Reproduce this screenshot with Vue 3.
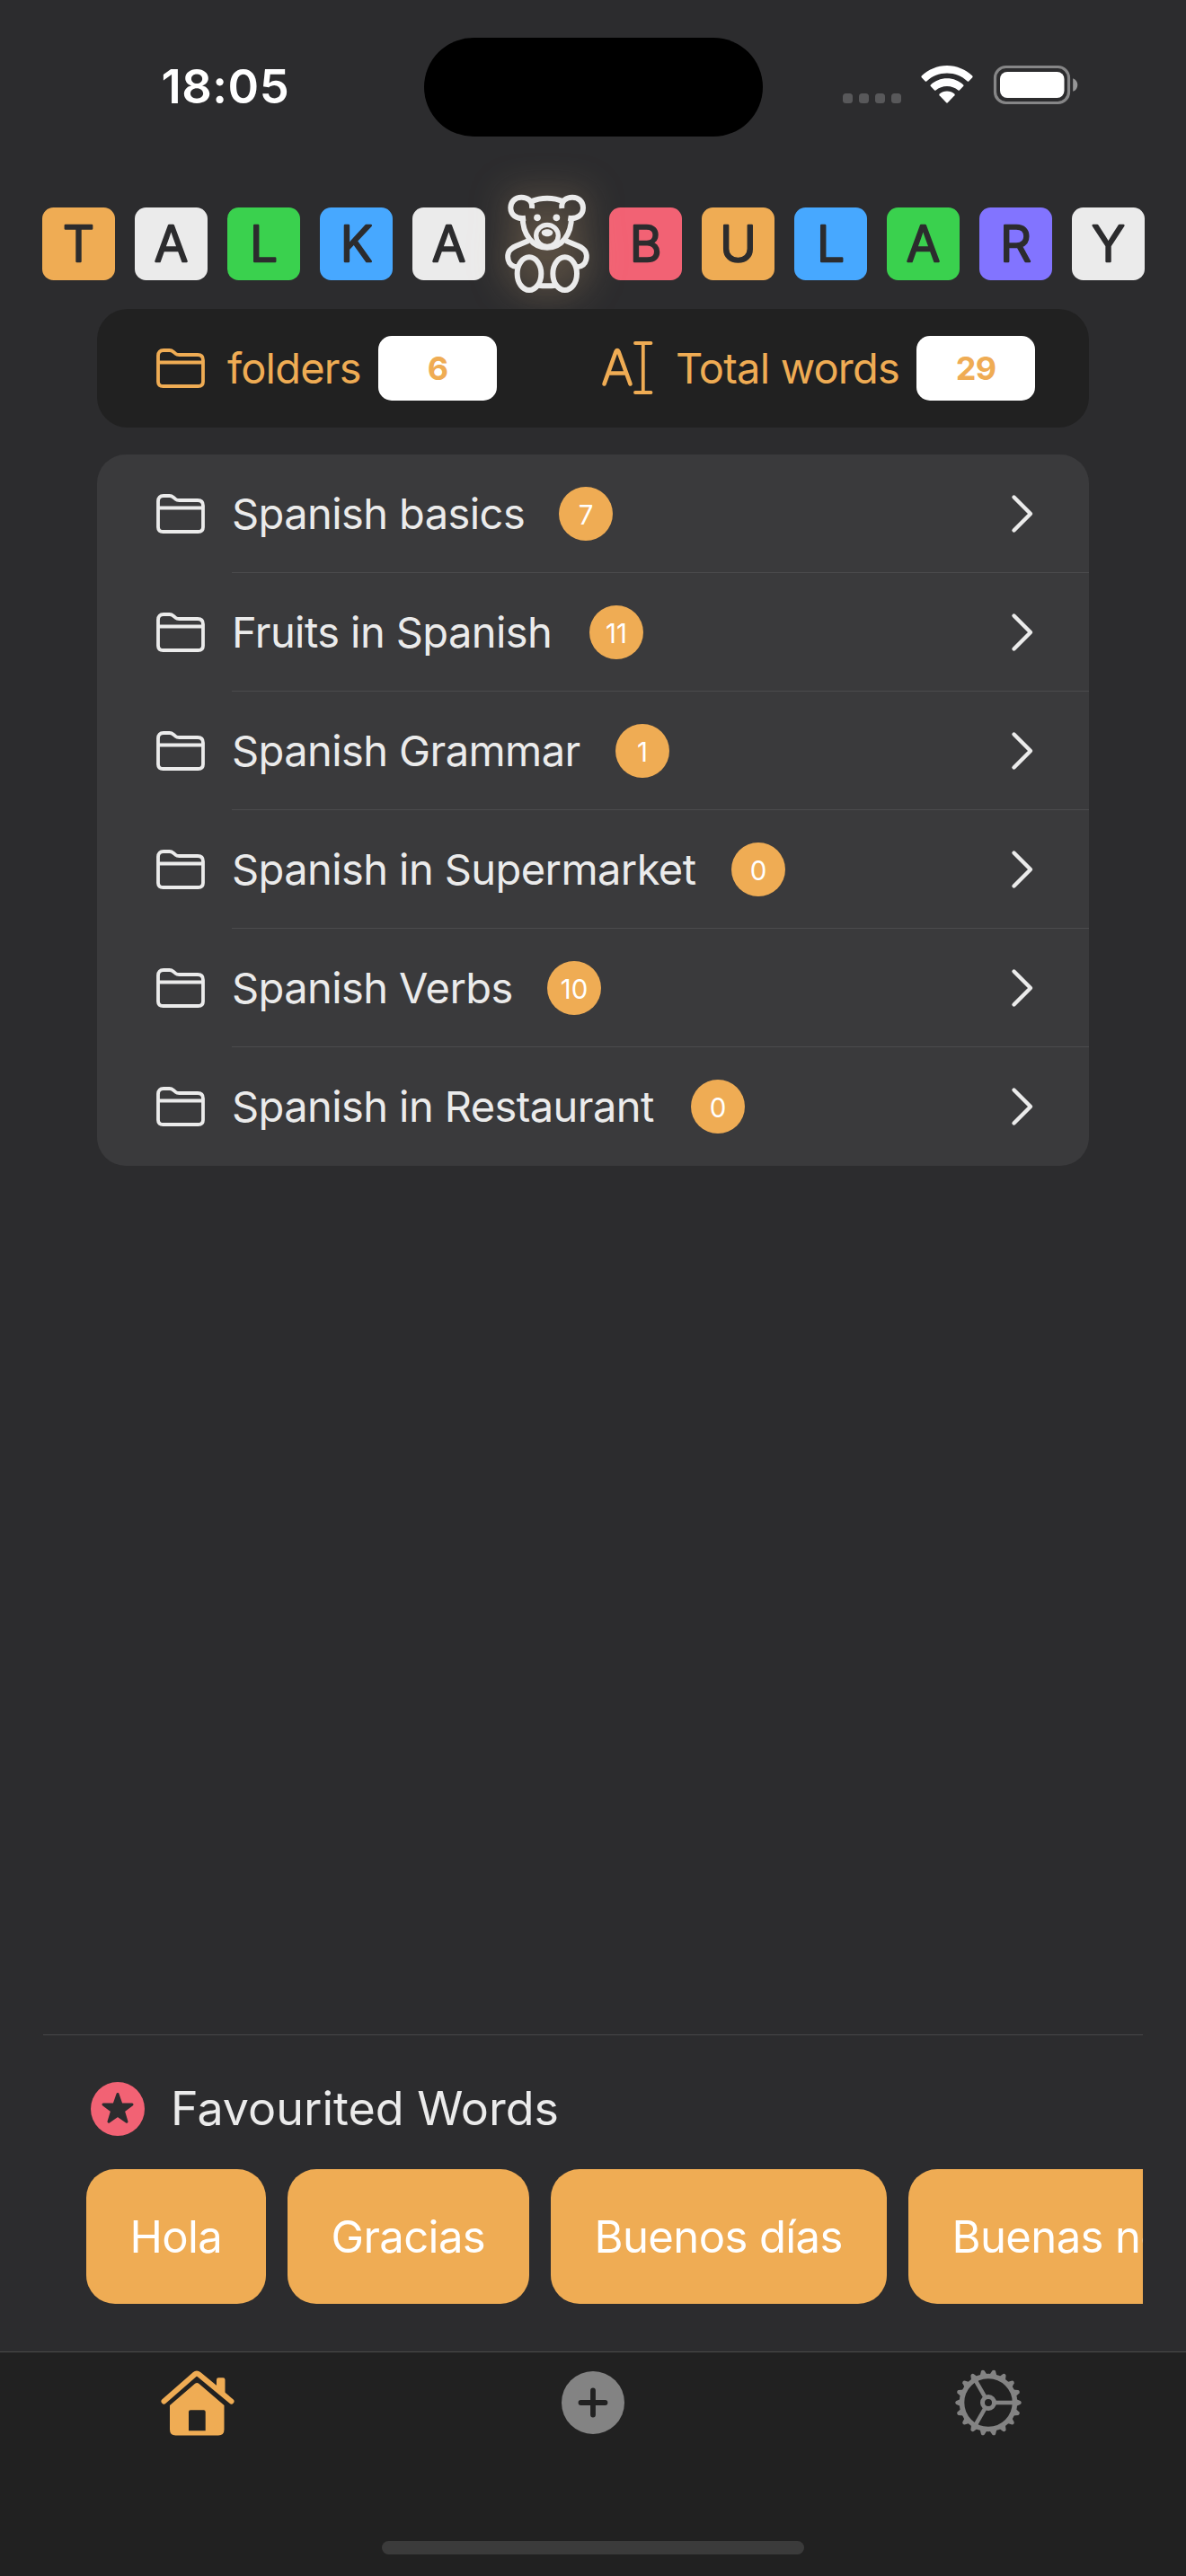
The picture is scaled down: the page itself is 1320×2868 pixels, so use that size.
<script setup>
const title = [
  { ch: 'T', color: '#efac54' },
  { ch: 'A', color: '#ebebeb' },
  { ch: 'L', color: '#3ad14e' },
  { ch: 'K', color: '#47a8ff' },
  { ch: 'A', color: '#ebebeb' },
  { bear: true },
  { ch: 'B', color: '#f26274' },
  { ch: 'U', color: '#efac54' },
  { ch: 'L', color: '#47a8ff' },
  { ch: 'A', color: '#3ad14e' },
  { ch: 'R', color: '#8274ff' },
  { ch: 'Y', color: '#ebebeb' }
]

const folders = [
  { name: 'Spanish basics', count: 7, width: 324 },
  { name: 'Fruits in Spanish', count: 11, width: 358 },
  { name: 'Spanish Grammar', count: 1, width: 387 },
  { name: 'Spanish in Supermarket', count: 0, width: 516 },
  { name: 'Spanish Verbs', count: 10, width: 311 },
  { name: 'Spanish in Restaurant', count: 0, width: 471 }
]

const favourites = [
  { word: 'Hola', width: 200 },
  { word: 'Gracias', width: 269 },
  { word: 'Buenos días', width: 374 },
  { word: 'Buenas noches', width: 440 }
]

const teeth = Array.from({ length: 18 }, (_, i) => i * 20)
</script>

<template>
  <div class="screen">
    <header class="status">
      <div class="time">18:05</div>
      <div class="island"></div>
      <div class="indicators">
        <div class="dots"><i v-for="n in 4" :key="n"></i></div>
        <svg class="wifi" width="58" height="42" viewBox="0 0 58 42">
          <path d="M29 0C40 0 50 4.500 57.300 11.600Q58 12.400 57.300 13.200L53.200 17.500Q52.500 18.200 51.700 17.500C45.500 11.800 37.600 8.600 29 8.600S12.500 11.800 6.300 17.500Q5.500 18.200 4.800 17.500L.7 13.200Q0 12.400 .7 11.600C8 4.500 18 0 29 0Z" />
          <path d="M29 14.300C36 14.300 42.400 17 47.200 21.400Q48 22.200 47.200 23L42.900 27.500Q42.200 28.200 41.400 27.500C38 24.500 33.700 22.900 29 22.900S20 24.500 16.600 27.500Q15.800 28.200 15.100 27.500L10.800 23Q10 22.200 10.800 21.400C15.600 17 22 14.300 29 14.300Z" />
          <path d="M29 28.600C32.300 28.600 35.100 29.700 37.300 31.500Q38.200 32.300 37.400 33.200L29.800 41.300Q29 42.100 28.200 41.300L20.600 33.200Q19.800 32.300 20.700 31.500C22.900 29.700 25.700 28.600 29 28.600Z" />
        </svg>
        <svg class="battery" width="94" height="43" viewBox="0 0 94 43">
          <rect x="1.500" y="1.500" width="82" height="40" rx="12" fill="none" stroke="#868687" stroke-width="3.200" />
          <rect x="7" y="7" width="71.500" height="29" rx="8" fill="#fff" />
          <path d="M88.200 14.200C95 16.500 95 26.500 88.200 28.800Z" fill="#969697" />
        </svg>
      </div>
    </header>

    <div class="title">
      <template v-for="(t, i) in title" :key="i">
        <svg v-if="t.bear" class="bear" width="94" height="110" viewBox="96 78 282 330">
          <g fill="none" stroke="#ebebeb" stroke-width="18">
            <path d="M183 103Q208 92 237 92T291 103" />
            <path d="M186 126C189 100 170 89 151 89C130 89 115 104 115 124C115 147 133 163 165 158" />
            <path d="M286 126C283 100 302 89 321 89C342 89 357 104 357 124C357 147 339 163 307 158" />
            <path d="M155 152C154 215 190 257 237 257S319 215 318 152" />
            <ellipse cx="237" cy="217" rx="37" ry="36" stroke-width="16" />
            <path d="M175 234L132 252C108 263 102 277 107 298C111 314 122 321 138 322" />
            <path d="M299 234L342 252C366 263 372 277 367 298C363 314 352 321 336 322" />
            <ellipse cx="177" cy="344" rx="40" ry="55" />
            <ellipse cx="296" cy="344" rx="40" ry="55" />
            <path d="M207 383Q237 387 266 383" />
          </g>
          <g fill="#ebebeb">
            <circle cx="204" cy="157" r="11.500" />
            <circle cx="268" cy="157" r="11.500" />
            <path d="M218 206C220 192 254 192 256 206C255 224 219 224 218 206Z" />
          </g>
        </svg>
        <svg v-else class="tile" width="81" height="81" viewBox="0 0 81 81">
          <rect width="81" height="81" rx="12.500" :fill="t.color" />
          <text x="40.500" y="60" text-anchor="middle">{{ t.ch }}</text>
        </svg>
      </template>
    </div>

    <section class="stats">
      <svg class="folder" width="54" height="44" viewBox="0 0 54 44">
        <path d="M2 37V8Q2 2 8 2H14.500Q17 2 19 3.700L21 5.400Q23 7 25.500 7H46Q52 7 52 13V37Q52 42 46.500 42H7.500Q2 42 2 37ZM2 15.500H52" />
      </svg>
      <span class="label folders-label">folders</span>
      <span class="value">6</span>
      <svg class="cursor-icon" width="57" height="60" viewBox="0 0 57 60">
        <path d="M2.500 47.500L15.300 12Q17 8 18.700 12L31.500 47.500M7 35.500H27" stroke-width="4.600" />
        <path d="M37 2H54.500M37 57H54.500M45.800 2V57" stroke-width="3.800" />
      </svg>
      <span class="label total-label">Total words</span>
      <span class="value">29</span>
    </section>

    <ul class="list">
      <li v-for="f in folders" :key="f.name" class="row">
        <svg class="folder" width="54" height="44" viewBox="0 0 54 44">
          <path d="M2 37V8Q2 2 8 2H14.500Q17 2 19 3.700L21 5.400Q23 7 25.500 7H46Q52 7 52 13V37Q52 42 46.500 42H7.500Q2 42 2 37ZM2 15.500H52" />
        </svg>
        <div class="row-body">
          <span class="name" :style="{ width: f.width + 'px' }">{{ f.name }}</span>
          <span class="count">{{ f.count }}</span>
          <svg class="chevron" width="24" height="42" viewBox="0 0 24 42">
            <path d="M2.500 2.500L21 21L2.500 39.500" />
          </svg>
        </div>
      </li>
    </ul>

    <section class="favourites">
      <div class="fav-head">
        <svg width="60" height="60" viewBox="0 0 60 60">
          <circle cx="30" cy="30" r="30" fill="#f26274" />
          <path d="M30 13.500L34 25H46L36.400 32.300L40 44.200L30 37.200L20 44.200L23.600 32.300L14 25H26Z" fill="#2c2c2e" stroke="#2c2c2e" stroke-width="3" stroke-linejoin="round" />
        </svg>
        <h2>Favourited Words</h2>
      </div>
      <div class="chips">
        <div v-for="c in favourites" :key="c.word" class="chip" :style="{ width: c.width + 'px' }">{{ c.word }}</div>
      </div>
    </section>

    <nav class="tabs">
      <div class="tab">
        <svg width="84" height="74" viewBox="0 0 84 74">
          <g transform="translate(.5 1)">
            <path d="M4 35L38 5.200Q40.500 3.200 43 5.200L79 35" transform="translate(0 -.5)" fill="none" stroke="#efac54" stroke-width="6" stroke-linecap="round" stroke-linejoin="round" />
            <path d="M62.500 22V10.500Q62.500 8.300 64.700 8.300H69.800Q72 8.300 72 10.500V30Z" fill="#efac54" />
            <path fill-rule="evenodd" d="M10.500 39L38.600 14.800Q40.700 13 42.800 14.800L71 39V66Q71 72.500 64.500 72.500H17Q10.500 72.500 10.500 66ZM33.500 44.300Q31.500 44.300 31.500 46.300V67.200H50.200V46.300Q50.200 44.300 48.200 44.300Z" fill="#efac54" />
          </g>
        </svg>
      </div>
      <div class="tab">
        <svg width="70" height="74" viewBox="0 -2 70 74">
          <circle cx="35" cy="35" r="35" fill="#838383" />
          <path d="M35 21.500V48.500M21.500 35H48.500" stroke="#212121" stroke-width="5.800" stroke-linecap="round" />
        </svg>
      </div>
      <div class="tab">
        <svg width="76" height="76" viewBox="-38 -38 76 76">
          <g fill="none" stroke="#838383">
            <circle r="29.500" stroke-width="5.600" />
            <circle r="6.500" stroke-width="5" />
            <g stroke-width="4.600">
              <path d="M8 0H29" />
              <path d="M8 0H29" transform="rotate(120)" />
              <path d="M8 0H29" transform="rotate(240)" />
            </g>
          </g>
          <path v-for="a in teeth" :key="a" d="M30.500 -4.200L36 -1.800Q37.800 0 36 1.800L30.500 4.200Z" fill="#838383" :transform="`rotate(${a})`" />
        </svg>
      </div>
    </nav>
    <div class="home-bar"><i></i></div>
  </div>
</template>

<style>
body {
  background: #2c2c2e;
}
</style>

<style scoped>
.screen {
  width: 1320px;
  height: 2868px;
  box-sizing: border-box;
  display: flex;
  flex-direction: column;
  overflow: hidden;
  background: #2c2c2e;
  color: #ebebeb;
  font-family: Inter, "Liberation Sans", sans-serif;
}
svg {
  display: block;
  flex: none;
  overflow: visible;
}
.status {
  height: 216px;
  display: flex;
  align-items: flex-start;
  box-sizing: border-box;
  padding-top: 42px;
}
.time {
  width: 292px;
  padding-left: 179.500px;
  height: 110px;
  line-height: 109px;
  font-size: 52.500px;
  font-weight: 600;
  letter-spacing: 0.500px;
  color: #fff;
}
.island {
  width: 377px;
  height: 110px;
  border-radius: 55px;
  background: #000;
}
.indicators {
  display: flex;
  align-items: flex-end;
  padding: 31px 0 0 89px;
}
.dots {
  display: flex;
  gap: 7px;
  padding-bottom: 1px;
}
.dots i {
  width: 11px;
  height: 11px;
  border-radius: 3.500px;
  background: #58585a;
}
.wifi {
  margin-left: 22px;
  margin-bottom: 1px;
  fill: #fff;
}
.battery {
  margin-left: 23px;
}
.title {
  height: 128px;
  display: flex;
  align-items: flex-start;
  justify-content: space-between;
  padding: 0 46px 0 47px;
}
.tile {
  margin-top: 15px;
}
.tile text {
  font-family: Inter, "Liberation Sans", sans-serif;
  font-size: 55px;
  font-weight: 300;
  fill: #2c2c2e;
  stroke: #2c2c2e;
  stroke-width: 2.600px;
  stroke-linejoin: round;
}
.bear {
  filter: drop-shadow(0 0 20px rgba(230, 184, 130, 0.580));
}
.stats {
  position: relative;
  height: 132px;
  margin: 0 108px;
  box-sizing: border-box;
  padding: 0 60px 0 66px;
  display: flex;
  align-items: center;
  border-radius: 34px;
  background: #212121;
  color: #efac54;
}
.folder {
  fill: none;
  stroke: currentColor;
  stroke-width: 3.800;
  stroke-linejoin: round;
}
.label {
  font-size: 47px;
  line-height: 132px;
  letter-spacing: -0.800px;
  white-space: nowrap;
}
.folders-label {
  width: 168px;
  margin-left: 25px;
}
.value {
  width: 132px;
  height: 72px;
  line-height: 72px;
  border-radius: 15px;
  background: #fff;
  font-size: 36px;
  font-weight: 700;
  letter-spacing: -0.800px;
  text-align: center;
}
.cursor-icon {
  margin-left: auto;
  fill: none;
  stroke: currentColor;
  stroke-linecap: round;
  stroke-linejoin: round;
}
.total-label {
  width: 268px;
  margin-left: 25px;
}
.list {
  list-style: none;
  margin: 30px 108px 0;
  padding: 0;
  border-radius: 32px;
  background: #3a3a3c;
  overflow: hidden;
}
.row {
  height: 132px;
  padding-left: 66px;
  display: flex;
  align-items: center;
}
.row-body {
  flex: 1;
  height: 132px;
  box-sizing: border-box;
  margin-left: 30px;
  padding-right: 62px;
  display: flex;
  align-items: center;
  border-bottom: 1px solid #4b4b4d;
}
.row:last-child .row-body {
  border-bottom-color: transparent;
}
.name {
  font-size: 47px;
  line-height: 130px;
  letter-spacing: -0.580px;
  white-space: nowrap;
}
.count {
  width: 60px;
  height: 60px;
  margin-left: 40px;
  line-height: 62px;
  border-radius: 50%;
  background: #efac54;
  color: #fff;
  font-size: 29.500px;
  text-align: center;
}
.chevron {
  margin-left: auto;
  fill: none;
  stroke: #ebebeb;
  stroke-width: 4.400;
  stroke-linecap: round;
  stroke-linejoin: round;
}
.favourites {
  margin: auto 48px 0;
  height: 353px;
  box-sizing: border-box;
  border-top: 1px solid #48484a;
  overflow: hidden;
}
.fav-head {
  display: flex;
  align-items: center;
  height: 60px;
  padding: 52px 0 0 53px;
}
.fav-head h2 {
  margin: 0 0 0 29px;
  font-size: 52px;
  font-weight: 400;
  line-height: 60px;
  white-space: nowrap;
}
.chips {
  display: flex;
  gap: 24px;
  padding: 37px 0 0 48px;
}
.chip {
  flex: none;
  box-sizing: border-box;
  height: 150px;
  padding-left: 48.500px;
  border-radius: 32px;
  background: #efac54;
  color: #fff;
  font-size: 49px;
  line-height: 152px;
  letter-spacing: -0.600px;
  white-space: nowrap;
}
.tabs {
  flex: none;
  height: 211px;
  box-sizing: border-box;
  border-top: 1px solid #4a4a4a;
  background: #212121;
  display: flex;
}
.tab {
  flex: 1;
  display: flex;
  align-items: center;
  justify-content: center;
  height: 76px;
  padding-top: 18px;
}
.home-bar {
  flex: none;
  height: 39px;
  background: #212121;
  display: flex;
  justify-content: center;
}
.home-bar i {
  width: 470px;
  height: 15px;
  border-radius: 8px;
  background: #3b3b3b;
}
</style>
